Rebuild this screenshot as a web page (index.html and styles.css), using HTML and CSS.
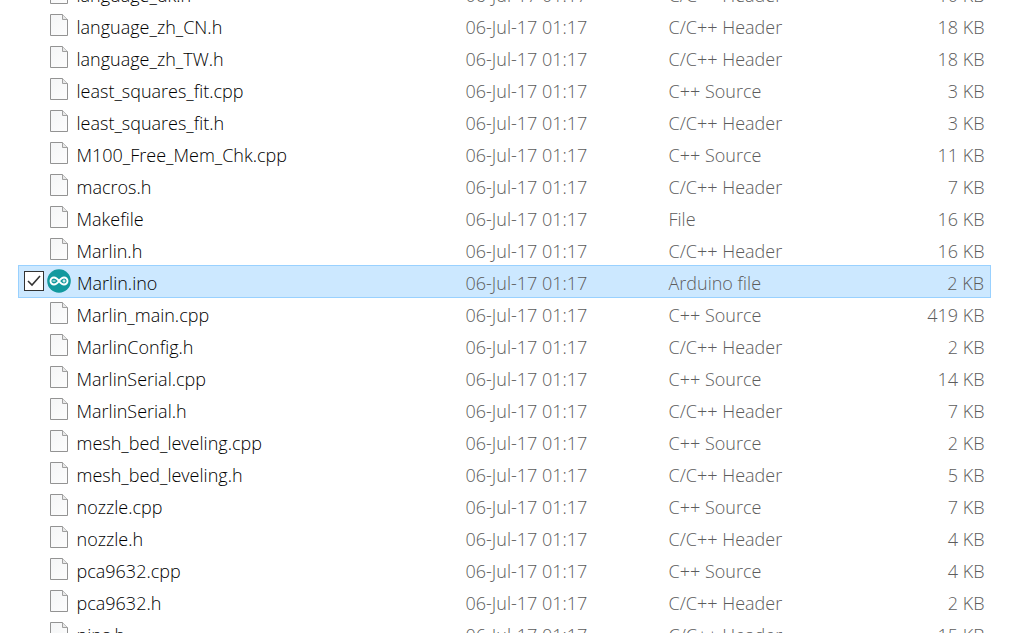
FILE: index.html
```html
<!DOCTYPE html>
<html lang="en">
<head>
<meta charset="utf-8">
<title>Marlin</title>
<link rel="stylesheet" href="styles.css">
</head>
<body>
<svg class="defs" aria-hidden="true">
  <linearGradient id="sheet" x1="0" y1="0" x2="1" y2="1"><stop offset="0" stop-color="#f4f5f6"/><stop offset="1" stop-color="#fdfdfd"/></linearGradient>
  <symbol id="page" viewBox="0 0 18 22">
    <path d="M.5 .5H12.500L17.500 5.500V21.500H.5z" fill="url(#sheet)" stroke="#939393"/>
    <path d="M12.500 .5V5.500H17.500" fill="#e8e8e8" stroke="#a0a0a0"/>
  </symbol>
</svg>
<main class="pane">
  <table class="files">
    <colgroup><col class="c-name"><col class="c-date"><col class="c-type"><col class="c-size"></colgroup>
    <tbody id="rows"></tbody>
  </table>
</main>
<script src="files.js"></script>
</body>
</html>
```
FILE: styles.css
```css
* { box-sizing: border-box; }
html, body { height: 100%; }
body {
  margin: 0;
  overflow: hidden;
  background: #fff;
  font: 300 18px/28px "Open Sans", "Noto Sans", sans-serif;
  color: #000;
}
.defs { position: absolute; width: 0; height: 0; }
.pane {
  height: 100%;
  overflow: hidden;
  padding: 0 22px 0 18px;
}
.files {
  width: 100%;
  margin-top: -23px;
  table-layout: fixed;
  border-collapse: collapse;
}
.c-name { width: 447px; }
.c-date { width: 203px; }
.c-size { width: 120px; }
/* Dotted loses to solid where collapsed borders meet, so the selected row keeps its outline. */
.files td {
  height: 32px;
  padding: 3px 0 0;
  border: 1px dotted transparent;
  border-width: 1px 0;
  color: #5c5c5c;
  white-space: nowrap;
}
.files .size { padding-right: 6px; text-align: right; }
.name { display: flex; align-items: center; color: #000; }
.tick {
  appearance: none;
  width: 20px;
  height: 20px;
  margin: 0 3px 4px 5px;
  border: 1px solid #333;
  background: #fff;
  visibility: hidden;
}
.icon { display: flex; justify-content: center; width: 24px; margin: 0 6px 4px 0; }
.page { width: 18px; height: 22px; }
.logo { width: 24px; height: 24px; }
.files .selected td { background: #cce8ff; border: 1px solid #99d1ff; border-width: 1px 0; }
.files .selected td:first-child { border-left-width: 1px; }
.files .selected td:last-child { border-right-width: 1px; }
.selected .tick {
  visibility: visible;
  background: #fff url("data:image/svg+xml,%3Csvg xmlns='http://www.w3.org/2000/svg' viewBox='0 0 18 18'%3E%3Cpath d='M3 9l4 4 8-9' fill='none' stroke='%23333' stroke-width='1.600'/%3E%3C/svg%3E");
}
```
FILE: files.js
```js
const files = [
  ["language_uk.h", "C/C++ Header", 10],
  ["language_zh_CN.h", "C/C++ Header", 18],
  ["language_zh_TW.h", "C/C++ Header", 18],
  ["least_squares_fit.cpp", "C++ Source", 3],
  ["least_squares_fit.h", "C/C++ Header", 3],
  ["M100_Free_Mem_Chk.cpp", "C++ Source", 11],
  ["macros.h", "C/C++ Header", 7],
  ["Makefile", "File", 16],
  ["Marlin.h", "C/C++ Header", 16],
  ["Marlin.ino", "Arduino file", 2],
  ["Marlin_main.cpp", "C++ Source", 419],
  ["MarlinConfig.h", "C/C++ Header", 2],
  ["MarlinSerial.cpp", "C++ Source", 14],
  ["MarlinSerial.h", "C/C++ Header", 7],
  ["mesh_bed_leveling.cpp", "C++ Source", 2],
  ["mesh_bed_leveling.h", "C/C++ Header", 5],
  ["nozzle.cpp", "C++ Source", 7],
  ["nozzle.h", "C/C++ Header", 4],
  ["pca9632.cpp", "C++ Source", 4],
  ["pca9632.h", "C/C++ Header", 2],
  ["pins.h", "C/C++ Header", 15]
];
const page = '<svg class="page"><use href="#page"/></svg>';
const logo = `<svg class="logo" viewBox="0 0 24 24"><circle cx="12" cy="12" r="11.800" fill="#12999e"/>
<g fill="none" stroke="#fff" stroke-width="1.900"><path d="M12 12C10 9.300 9 8.500 7 8.500a3.500 3.500 0 0 0 0 7C9 15.500 10 14.700 12 12S15 8.500 17 8.500a3.500 3.500 0 0 1 0 7C15 15.500 14 14.700 12 12z"/>
<path stroke-width="1.200" d="M5.500 12h3M15.500 12h3M17 10.500v3"/></g></svg>`;
document.getElementById("rows").innerHTML = files.map(([name, type, size]) => {
  const on = name === "Marlin.ino";
  return `<tr class="${on ? "selected" : ""}">
<td><label class="name"><input class="tick" type="checkbox"${on ? " checked" : ""}><span class="icon">${on ? logo : page}</span><span>${name}</span></label></td>
<td>06-Jul-17 01:17</td><td>${type}</td><td class="size">${size} KB</td></tr>`;
}).join("");
```
